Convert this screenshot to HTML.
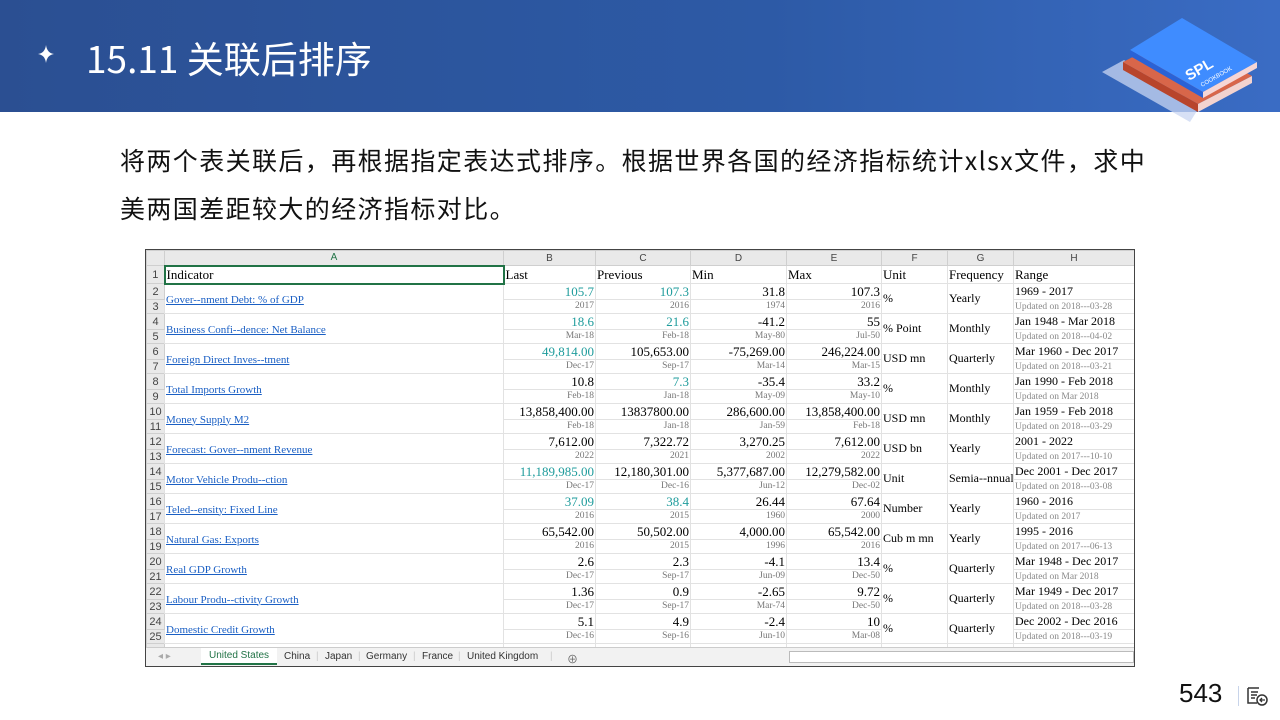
<!DOCTYPE html>
<html><head><meta charset="utf-8"><style>
*{margin:0;padding:0;box-sizing:border-box}
body{width:1280px;height:720px;overflow:hidden;background:#fff;position:relative;font-family:"Liberation Sans","Noto Sans CJK SC",sans-serif}
.hdr{position:absolute;left:0;top:0;width:1280px;height:112px;background:linear-gradient(90deg,#2b4f92 0%,#2d5aa6 60%,#3a6cc4 100%)}
.title{position:absolute;left:86px;top:30px;color:#fff;font-size:37px;font-family:"Noto Sans CJK SC","Liberation Sans",sans-serif;font-weight:400}
.star{position:absolute;left:38px;top:45px}
.para{position:absolute;left:120px;top:136px;font-size:25px;line-height:48px;color:#111;font-family:"Noto Sans CJK SC",sans-serif;width:1100px;letter-spacing:1.4px;white-space:nowrap}
.sheet{position:absolute;left:145px;top:249px;width:990px;height:418px;border:1px solid #444;overflow:hidden;background:#fff}
table{border-collapse:collapse;table-layout:fixed;position:absolute;left:0;top:0;width:988px;font-family:"Liberation Serif",serif}
td{border:1px solid #e2e2e2;white-space:nowrap;overflow:hidden;padding:0 1px;color:#000}
.ch td{background:#e9e9e9;color:#444;font-family:"Liberation Sans",sans-serif;font-size:10px;text-align:center;height:15px;border-color:#cfcfcf}
.rh{background:#e9e9e9;color:#444;font-family:"Liberation Sans",sans-serif;font-size:11px;text-align:center;border-color:#cfcfcf;padding:0}
.v td.n{text-align:right;font-size:13px;height:16px;line-height:15px}
.d td.n{text-align:right;font-size:9.5px;color:#777;height:14px;line-height:13px}
.t{color:#1f9c9c!important}
a{color:#1a5fc4;text-decoration:underline;font-size:11px}
.f{font-size:12px}
.hr1{font-size:12px}
.hr2{font-size:9.5px;color:#888}
.tabs{position:absolute;left:0;top:397px;width:990px;height:21px;background:#f2f2f2;border-top:1px solid #ccc;font-size:10px;color:#333}
.tabs span{position:absolute;top:3px}
</style></head><body>
<div class="hdr"></div>
<svg class="star" width="16" height="18" viewBox="0 0 16 18"><path d="M8 0 Q9 8 16 9 Q9 10 8 18 Q7 10 0 9 Q7 8 8 0Z" fill="#fff"/></svg>
<div class="title">15.11 关联后排序</div>
<svg style="position:absolute;left:1090px;top:0" width="190" height="125" viewBox="1090 0 190 125">
<polygon points="1102,72 1124,60 1200,106 1190,122" fill="#c9d6f2" opacity="0.75"/>
<polygon points="1123,62 1178,34 1252,76 1198,104" fill="#d8664a"/>
<polygon points="1123,62 1198,104 1198,112 1123,70" fill="#b8452c"/>
<polygon points="1198,104 1252,76 1252,83 1198,112" fill="#f3d3cf"/>
<polygon points="1130,50 1182,18 1257,62 1203,92" fill="#3f8cff"/>
<polygon points="1130,50 1203,92 1203,98 1130,56" fill="#2a62d6"/>
<polygon points="1203,92 1257,62 1257,68 1203,98" fill="#f5d6d6"/>
<text transform="translate(1189,81) rotate(-30)" fill="#fff" font-size="15" font-weight="bold" font-family="Liberation Sans">SPL</text>
<text transform="translate(1202,87) rotate(-30)" fill="#fff" font-size="6" font-family="Liberation Sans">COOKBOOK</text>
</svg>
<div class="para">将两个表关联后，再根据指定表达式排序。根据世界各国的经济指标统计xlsx文件，求中<br>美两国差距较大的经济指标对比。</div>
<div class="sheet">
<table>
<colgroup><col style="width:18px"><col style="width:339px"><col style="width:92px"><col style="width:95px"><col style="width:96px"><col style="width:95px"><col style="width:66px"><col style="width:66px"><col style="width:121px"></colgroup>
<tr class="ch"><td></td><td style="color:#217346">A</td><td>B</td><td>C</td><td>D</td><td>E</td><td>F</td><td>G</td><td>H</td></tr>
<tr style="height:18px;font-size:13px"><td class="rh">1</td><td style="border:2px solid #217346">Indicator</td><td>Last</td><td>Previous</td><td>Min</td><td>Max</td><td>Unit</td><td>Frequency</td><td>Range</td></tr>
<tr class="v"><td class="rh">2</td><td rowspan="2"><a>Gover--nment Debt: % of GDP</a></td><td class="n t">105.7</td><td class="n t">107.3</td><td class="n">31.8</td><td class="n">107.3</td><td rowspan="2" class="f">%</td><td rowspan="2" class="f">Yearly</td><td class="hr1">1969 - 2017</td></tr>
<tr class="d"><td class="rh">3</td><td class="n">2017</td><td class="n">2016</td><td class="n">1974</td><td class="n">2016</td><td class="hr2">Updated on 2018---03-28</td></tr>
<tr class="v"><td class="rh">4</td><td rowspan="2"><a>Business Confi--dence: Net Balance</a></td><td class="n t">18.6</td><td class="n t">21.6</td><td class="n">-41.2</td><td class="n">55</td><td rowspan="2" class="f">% Point</td><td rowspan="2" class="f">Monthly</td><td class="hr1">Jan 1948 - Mar 2018</td></tr>
<tr class="d"><td class="rh">5</td><td class="n">Mar-18</td><td class="n">Feb-18</td><td class="n">May-80</td><td class="n">Jul-50</td><td class="hr2">Updated on 2018---04-02</td></tr>
<tr class="v"><td class="rh">6</td><td rowspan="2"><a>Foreign Direct Inves--tment</a></td><td class="n t">49,814.00</td><td class="n">105,653.00</td><td class="n">-75,269.00</td><td class="n">246,224.00</td><td rowspan="2" class="f">USD mn</td><td rowspan="2" class="f">Quarterly</td><td class="hr1">Mar 1960 - Dec 2017</td></tr>
<tr class="d"><td class="rh">7</td><td class="n">Dec-17</td><td class="n">Sep-17</td><td class="n">Mar-14</td><td class="n">Mar-15</td><td class="hr2">Updated on 2018---03-21</td></tr>
<tr class="v"><td class="rh">8</td><td rowspan="2"><a>Total Imports Growth</a></td><td class="n">10.8</td><td class="n t">7.3</td><td class="n">-35.4</td><td class="n">33.2</td><td rowspan="2" class="f">%</td><td rowspan="2" class="f">Monthly</td><td class="hr1">Jan 1990 - Feb 2018</td></tr>
<tr class="d"><td class="rh">9</td><td class="n">Feb-18</td><td class="n">Jan-18</td><td class="n">May-09</td><td class="n">May-10</td><td class="hr2">Updated on Mar 2018</td></tr>
<tr class="v"><td class="rh">10</td><td rowspan="2"><a>Money Supply M2</a></td><td class="n">13,858,400.00</td><td class="n">13837800.00</td><td class="n">286,600.00</td><td class="n">13,858,400.00</td><td rowspan="2" class="f">USD mn</td><td rowspan="2" class="f">Monthly</td><td class="hr1">Jan 1959 - Feb 2018</td></tr>
<tr class="d"><td class="rh">11</td><td class="n">Feb-18</td><td class="n">Jan-18</td><td class="n">Jan-59</td><td class="n">Feb-18</td><td class="hr2">Updated on 2018---03-29</td></tr>
<tr class="v"><td class="rh">12</td><td rowspan="2"><a>Forecast: Gover--nment Revenue</a></td><td class="n">7,612.00</td><td class="n">7,322.72</td><td class="n">3,270.25</td><td class="n">7,612.00</td><td rowspan="2" class="f">USD bn</td><td rowspan="2" class="f">Yearly</td><td class="hr1">2001 - 2022</td></tr>
<tr class="d"><td class="rh">13</td><td class="n">2022</td><td class="n">2021</td><td class="n">2002</td><td class="n">2022</td><td class="hr2">Updated on 2017---10-10</td></tr>
<tr class="v"><td class="rh">14</td><td rowspan="2"><a>Motor Vehicle Produ--ction</a></td><td class="n t">11,189,985.00</td><td class="n">12,180,301.00</td><td class="n">5,377,687.00</td><td class="n">12,279,582.00</td><td rowspan="2" class="f">Unit</td><td rowspan="2" class="f">Semia--nnual</td><td class="hr1">Dec 2001 - Dec 2017</td></tr>
<tr class="d"><td class="rh">15</td><td class="n">Dec-17</td><td class="n">Dec-16</td><td class="n">Jun-12</td><td class="n">Dec-02</td><td class="hr2">Updated on 2018---03-08</td></tr>
<tr class="v"><td class="rh">16</td><td rowspan="2"><a>Teled--ensity: Fixed Line</a></td><td class="n t">37.09</td><td class="n t">38.4</td><td class="n">26.44</td><td class="n">67.64</td><td rowspan="2" class="f">Number</td><td rowspan="2" class="f">Yearly</td><td class="hr1">1960 - 2016</td></tr>
<tr class="d"><td class="rh">17</td><td class="n">2016</td><td class="n">2015</td><td class="n">1960</td><td class="n">2000</td><td class="hr2">Updated on 2017</td></tr>
<tr class="v"><td class="rh">18</td><td rowspan="2"><a>Natural Gas: Exports</a></td><td class="n">65,542.00</td><td class="n">50,502.00</td><td class="n">4,000.00</td><td class="n">65,542.00</td><td rowspan="2" class="f">Cub m mn</td><td rowspan="2" class="f">Yearly</td><td class="hr1">1995 - 2016</td></tr>
<tr class="d"><td class="rh">19</td><td class="n">2016</td><td class="n">2015</td><td class="n">1996</td><td class="n">2016</td><td class="hr2">Updated on 2017---06-13</td></tr>
<tr class="v"><td class="rh">20</td><td rowspan="2"><a>Real GDP Growth</a></td><td class="n">2.6</td><td class="n">2.3</td><td class="n">-4.1</td><td class="n">13.4</td><td rowspan="2" class="f">%</td><td rowspan="2" class="f">Quarterly</td><td class="hr1">Mar 1948 - Dec 2017</td></tr>
<tr class="d"><td class="rh">21</td><td class="n">Dec-17</td><td class="n">Sep-17</td><td class="n">Jun-09</td><td class="n">Dec-50</td><td class="hr2">Updated on Mar 2018</td></tr>
<tr class="v"><td class="rh">22</td><td rowspan="2"><a>Labour Produ--ctivity Growth</a></td><td class="n">1.36</td><td class="n">0.9</td><td class="n">-2.65</td><td class="n">9.72</td><td rowspan="2" class="f">%</td><td rowspan="2" class="f">Quarterly</td><td class="hr1">Mar 1949 - Dec 2017</td></tr>
<tr class="d"><td class="rh">23</td><td class="n">Dec-17</td><td class="n">Sep-17</td><td class="n">Mar-74</td><td class="n">Dec-50</td><td class="hr2">Updated on 2018---03-28</td></tr>
<tr class="v"><td class="rh">24</td><td rowspan="2"><a>Domestic Credit Growth</a></td><td class="n">5.1</td><td class="n">4.9</td><td class="n">-2.4</td><td class="n">10</td><td rowspan="2" class="f">%</td><td rowspan="2" class="f">Quarterly</td><td class="hr1">Dec 2002 - Dec 2016</td></tr>
<tr class="d"><td class="rh">25</td><td class="n">Dec-16</td><td class="n">Sep-16</td><td class="n">Jun-10</td><td class="n">Mar-08</td><td class="hr2">Updated on 2018---03-19</td></tr>
<tr class="v"><td class="rh">26</td><td rowspan="2"></td><td class="n">146.9</td><td class="n t">138.2</td><td class="n">26.6</td><td class="n">152</td><td rowspan="2"></td><td rowspan="2"></td><td class="hr1">1975 - 2016</td></tr>
</table>
<div class="tabs">
<span style="left:12px;color:#aaa">◂ ▸</span>
<span style="left:55px;top:0;height:17px;background:#fff;border-bottom:2px solid #217346;color:#217346;padding:2px 8px">United States</span>
<span style="left:138px">China</span><span style="left:170px;color:#ccc">|</span>
<span style="left:179px">Japan</span><span style="left:212px;color:#ccc">|</span>
<span style="left:220px">Germany</span><span style="left:267px;color:#ccc">|</span>
<span style="left:276px">France</span><span style="left:312px;color:#ccc">|</span>
<span style="left:321px">United Kingdom</span><span style="left:404px;color:#ccc">|</span>
<span style="left:421px;font-size:11px;color:#666">⊕</span>
<span style="left:643px;top:3px;width:345px;height:12px;border:1px solid #bbb;background:#fff"></span>
</div>
</div>
<div style="position:absolute;left:1179px;top:678px;font-size:26px;color:#111">543</div>
<div style="position:absolute;left:1238px;top:686px;width:1px;height:20px;background:#c8d4ea"></div>
<svg style="position:absolute;left:1246px;top:686px" width="22" height="20" viewBox="0 0 22 20"><path d="M2 2h11M2 2v15h9M5 6h7M5 9h6M5 12h4" stroke="#333" stroke-width="1.5" fill="none"/><circle cx="16" cy="14" r="5" stroke="#333" stroke-width="1.5" fill="#fff"/><path d="M19 14h-5M16 12l-2 2 2 2" stroke="#333" stroke-width="1.3" fill="none"/></svg>
</body></html>
